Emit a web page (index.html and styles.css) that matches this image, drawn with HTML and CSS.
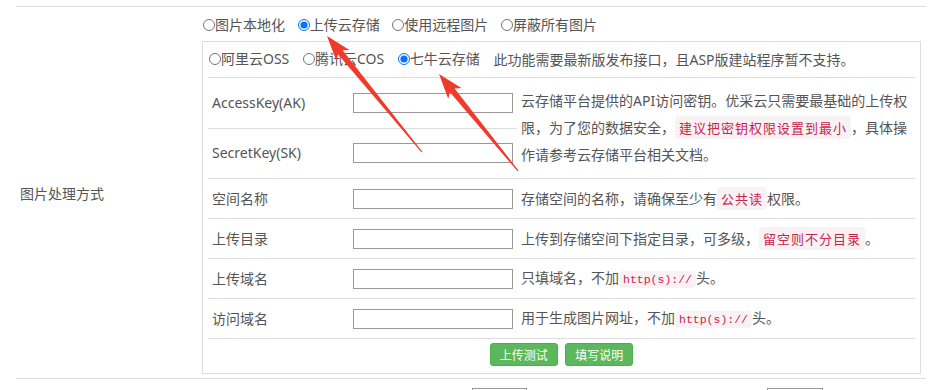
FILE: index.html
```html
<!DOCTYPE html>
<html lang="zh-CN">
<head>
    <meta charset="UTF-8">
    <title>图片处理方式</title>
    <link rel="stylesheet" href="styles.css">
</head>
<body>
    <table class="form">
        <tr>
            <td class="label">图片处理方式</td>
            <td class="field">
                <div class="options">
                    <label><input type="radio" name="mode">图片本地化</label>
                    <label><input type="radio" name="mode" checked>上传云存储</label>
                    <label><input type="radio" name="mode">使用远程图片</label>
                    <label><input type="radio" name="mode">屏蔽所有图片</label>
                </div>
                <div class="cloud-box">
                    <table class="cloud">
                        <tr>
                            <td colspan="3" class="providers">
                                <label><input type="radio" name="cloud">阿里云OSS</label>
                                <label><input type="radio" name="cloud">腾讯云COS</label>
                                <label><input type="radio" name="cloud" checked>七牛云存储</label>
                                <span>此功能需要最新版发布接口，且ASP版建站程序暂不支持。</span>
                            </td>
                        </tr>
                        <tr class="key">
                            <td class="name">AccessKey(AK)</td>
                            <td class="input"><input type="text"></td>
                            <td class="desc multi" rowspan="2">云存储平台提供的API访问密钥。优采云只需要最基础的上传权限，为了您的数据安全，<code class="cn">建议把密钥权限设置到最小</code>，具体操作请参考云存储平台相关文档。</td>
                        </tr>
                        <tr class="key">
                            <td class="name">SecretKey(SK)</td>
                            <td class="input"><input type="text"></td>
                        </tr>
                        <tr>
                            <td class="name">空间名称</td>
                            <td class="input"><input type="text"></td>
                            <td class="desc">存储空间的名称，请确保至少有<code class="cn">公共读</code>权限。</td>
                        </tr>
                        <tr>
                            <td class="name">上传目录</td>
                            <td class="input"><input type="text"></td>
                            <td class="desc">上传到存储空间下指定目录，可多级，<code class="cn">留空则不分目录</code>。</td>
                        </tr>
                        <tr>
                            <td class="name">上传域名</td>
                            <td class="input"><input type="text"></td>
                            <td class="desc">只填域名，不加<code>http(s)://</code>头。</td>
                        </tr>
                        <tr>
                            <td class="name">访问域名</td>
                            <td class="input"><input type="text"></td>
                            <td class="desc">用于生成图片网址，不加<code>http(s)://</code>头。</td>
                        </tr>
                        <tr>
                            <td colspan="3" class="actions">
                                <button>上传测试</button>
                                <button>填写说明</button>
                            </td>
                        </tr>
                    </table>
                </div>
            </td>
        </tr>
        <tr class="next">
            <td class="label"></td>
            <td class="field">
                <input type="text" class="small first">
                <input type="text" class="small second">
            </td>
        </tr>
    </table>

    <svg class="arrows" width="949" height="390" viewBox="0 0 949 390">
        <polygon transform="translate(327 36) rotate(50.7)" points="0,0 25,-8.5 21,-3 150,-0.5 150,0.5 21,3 25,8.5"/>
        <polygon transform="translate(439 74) rotate(50.8)" points="0,0 25,-8.5 21,-3 125,-0.6 125,0.6 21,3 25,8.5"/>
    </svg>
</body>
</html>
```

FILE: styles.css
```css
body {
    margin: 0;
    position: relative;
    font-family: 'Noto Sans', 'Noto Sans CJK SC', sans-serif;
    font-size: 14px;
    color: #555;
    background-color: #fff;
    overflow: hidden;
    height: 390px;
}
table {
    border-collapse: collapse;
}
.form {
    margin: 6px 0 0 16px;
    width: 910px;
}
.form > tbody > tr > td {
    border-top: 1px solid #ddd;
    border-bottom: 1px solid #ddd;
}
.form .label {
    width: 179px;
    padding: 0 0 0 4px;
    vertical-align: middle;
}
.form .field {
    padding: 6px 5px 4px 3px;
}
label {
    display: inline-flex;
    align-items: center;
    margin-right: 9px;
    white-space: nowrap;
}
input[type="radio"] {
    width: 12px;
    height: 12px;
    margin: 0;
}
.options {
    padding-left: 1px;
    line-height: 24px;
    height: 24px;
    margin-bottom: 4px;
}
.cloud-box {
    border: 1px solid #ddd;
    padding: 0 5px;
}
.cloud {
    width: 100%;
}
.cloud td {
    padding: 0 4px;
    border-top: 1px solid #ddd;
    height: 39px;
    line-height: 20px;
    vertical-align: middle;
}
.cloud tr:first-child td {
    border-top: none;
}
.providers {
    padding-left: 1px !important;
    height: 35px !important;
}
.providers label {
    margin-right: 10px;
}
.cloud .name {
    width: 133px;
}
.cloud .input {
    width: 160px;
}
.cloud .key td {
    height: 49px;
}
input[type="text"] {
    display: block;
    box-sizing: border-box;
    width: 160px;
    height: 20px;
    margin: 0;
    border: 1px solid #999;
    padding: 0 4px;
}
.cloud .desc {
    white-space: nowrap;
}
.cloud .desc.multi {
    white-space: normal;
    line-height: 27px;
    padding-top: 9px;
    padding-bottom: 10px;
}
code {
    font-family: 'Liberation Mono', 'Noto Sans CJK SC', monospace;
    font-size: 11.5px;
    color: #c7254e;
    background-color: #f9f2f4;
    border-radius: 4px;
    padding: 2px 4px;
}
code.cn {
    font-family: 'Noto Sans CJK SC', monospace;
    font-size: 13px;
    letter-spacing: 1px;
}
.actions {
    text-align: center;
    height: auto !important;
    padding: 4px 0 7px !important;
}
button {
    font-family: 'Noto Sans CJK SC', sans-serif;
    font-size: 12px;
    line-height: 17px;
    color: #fff;
    background-color: #5cb85c;
    border: 1px solid #4cae4c;
    border-radius: 3px;
    padding: 2px 9px;
    margin: 0 2px;
    cursor: pointer;
}
.next .field {
    padding-top: 9px;
    height: 30px;
    vertical-align: top;
}
input.small {
    display: inline-block;
    height: 22px;
}
input.first {
    width: 55px;
    margin-left: 270px;
}
input.second {
    width: 56px;
    margin-left: 236px;
}
.arrows {
    position: absolute;
    top: 0;
    left: 0;
    pointer-events: none;
    fill: #f03a2c;
}
```
